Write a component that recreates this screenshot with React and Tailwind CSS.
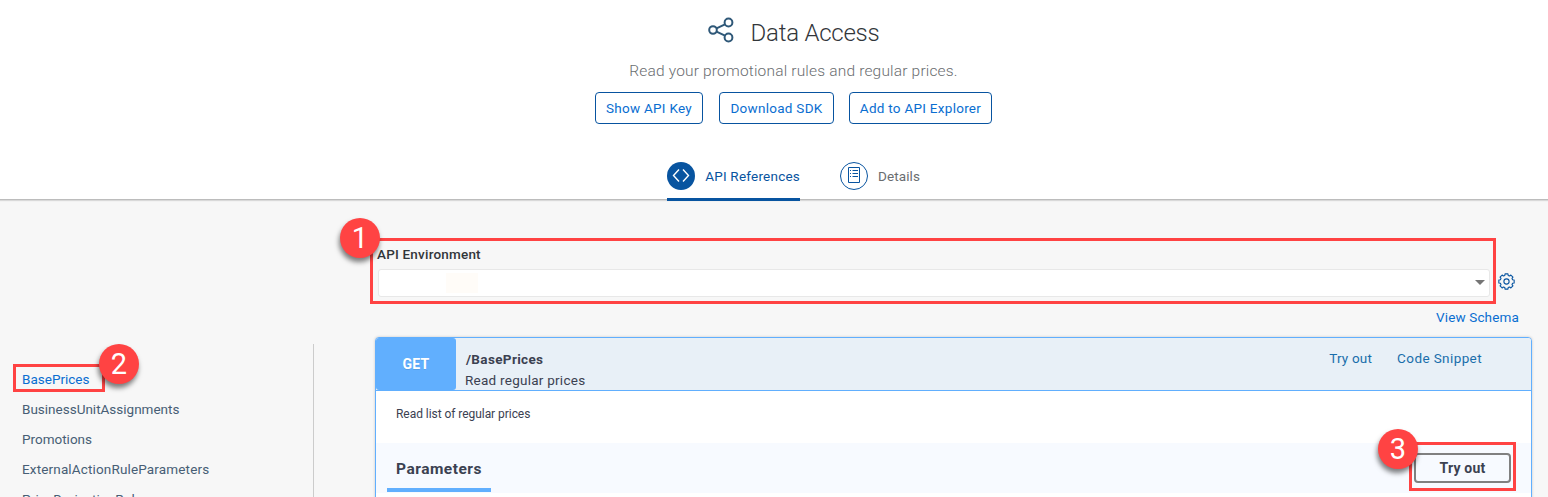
const Share = () => (
  <svg className="h-[27px] w-[27px]" viewBox="0 0 27 27" fill="none" stroke="#2f5878" strokeWidth="2">
    <circle cx="5" cy="13" r="3.8" />
    <circle cx="20.5" cy="5.5" r="3.9" />
    <circle cx="20.5" cy="20.5" r="3.9" />
    <path d="M8.5 11.4 17 7.3M8.5 14.6 17 18.7" />
  </svg>
);

const Gear = () => {
  const points = [];
  for (let i = 0; i < 8; i++) {
    [[-0.27, 6.3], [-0.19, 7.8], [0.19, 7.8], [0.27, 6.3]].forEach(([d, r]) => {
      const a = (i * Math.PI) / 4 + d;
      points.push(`${(8.5 + r * Math.cos(a)).toFixed(2)},${(8.5 + r * Math.sin(a)).toFixed(2)}`);
    });
  }
  return (
    <svg className="h-[17px] w-[17px]" viewBox="0 0 17 17" fill="none" stroke="#0854a0" strokeWidth="1.1" strokeLinejoin="round">
      <polygon points={points.join(' ')} />
      <circle cx="8.5" cy="8.5" r="2.6" />
    </svg>
  );
};

const Callout = ({ n, className }) => (
  <div className={`absolute z-20 flex h-10 w-10 items-center justify-center rounded-full bg-[#ff4343] pt-px text-[29px] leading-none font-normal text-white shadow-[-1px_4px_5px_rgba(0,0,0,0.5)] ${className}`}>
    {n}
  </div>
);

const Button = ({ children, className }) => (
  <button className={`h-8 rounded-[4px] border border-[#0854a0] text-[13.5px] tracking-[0.27px] whitespace-nowrap text-[#0a6ed1] ${className}`}>{children}</button>
);

const Header = () => (
  <header className="h-[200px] border-b border-[#bcbcbc] bg-white pl-[39px] shadow-[0_1px_1px_rgba(0,0,0,0.12)]">
    <div className="flex h-full flex-col items-center">
      <div className="mt-[17px] flex h-8 items-center gap-4">
        <div className="pb-[5px]"><Share /></div>
        <h1 className="text-[24px] leading-8 font-light tracking-[-0.25px] whitespace-nowrap text-[#32363a]">Data Access</h1>
      </div>
      <p className="mt-[11px] h-[22px] text-[15.5px] leading-[22px] font-light tracking-[0.18px] whitespace-nowrap text-[#6a6d70]">Read your promotional rules and regular prices.</p>
      <div className="mt-[10px] flex">
        <Button className="mr-4 w-[108px]">Show API Key</Button>
        <Button className="mr-[15px] w-[115px]">Download SDK</Button>
        <Button className="w-[143px]">Add to API Explorer</Button>
      </div>
      <nav className="mt-[34px] flex h-[43px] gap-10">
        <div className="relative z-10 flex h-[43px] w-[133px] justify-between border-b-[3px] border-[#0854a0] pt-1">
          <span className="flex h-7 w-7 items-center justify-center rounded-full bg-[#0854a0]">
            <svg className="h-[14px] w-[18px]" viewBox="0 0 18 14" fill="none" stroke="#fff" strokeWidth="1.4">
              <path d="M7 .5 1.500 6.500l5.500 6M11 .5l5.500 6-5.500 6" />
            </svg>
          </span>
          <span className="text-[13.5px] leading-7 tracking-[0.22px] whitespace-nowrap text-[#0854a0]">API References</span>
        </div>
        <div className="flex w-20 justify-between pt-1">
          <span className="flex h-7 w-7 items-center justify-center rounded-full border border-[#0854a0] pb-px">
            <svg className="h-[17px] w-[12px]" viewBox="0 0 12 17" fill="none" stroke="#0854a0">
              <path d="M.5.5h11v15H.5zM2 3.500h1M4.500 3.500H10M2 6.500h1M4.500 6.500H10M2 9.500h1M4.500 9.500H10" />
            </svg>
          </span>
          <span className="text-[13.5px] leading-7 tracking-[0.1px] whitespace-nowrap text-[#6a6d70]">Details</span>
        </div>
      </nav>
    </div>
  </header>
);

const Sidebar = () => (
  <aside className="mt-[144px] h-[153px] w-[314px] shrink-0 border-r border-[#ccc] pt-5 text-[13.5px] leading-[30px] whitespace-nowrap text-[#475e75]">
    <div className="relative ml-[13px] h-[28px] w-[92px] border-3 border-[#ff4343] pl-[6px] leading-[24px] text-[#0a6ed1]">
      BasePrices
      <Callout n="2" className="-top-[23px] left-[83px]" />
    </div>
    <div className="mt-[2px] ml-[22px]">
      <div>BusinessUnitAssignments</div>
      <div>Promotions</div>
      <div className="tracking-[0.15px]">ExternalActionRuleParameters</div>
      <div className="tracking-[0.15px]">PriceDerivationRules</div>
    </div>
  </aside>
);

const Environment = () => (
  <div className="flex items-start">
    <div className="relative -ml-[5px] h-[66px] w-[1126px] border-3 border-[#ff4343] pr-[3px] pl-[5px]">
      <Callout n="1" className="-top-[23px] -left-[33px]" />
      <div className="-ml-px h-7 text-[13.5px] leading-[26px] font-medium tracking-[0.2px] text-[#32363a]">API Environment</div>
      <div className="flex h-[28px] items-center justify-end rounded-[3px] border border-[#e8e8e8] bg-white pr-1">
        <span className="mr-auto ml-[67px] h-5 w-8 bg-[#fffcf8]" />
        <span className="mb-px h-0 w-0 border-x-[5px] border-t-[5px] border-x-transparent border-t-[#757575]" />
      </div>
    </div>
    <div className="mt-[35px] ml-[2px]"><Gear /></div>
  </div>
);

const Endpoint = () => (
  <section className="h-[200px] w-[1157px] rounded-[4px] border border-[#61affe] bg-white text-[#3b4151] shadow-[0_0_3px_rgba(0,0,0,0.19)]">
    <div className="flex h-[53px] rounded-t-[3px] border-b border-[#61affe] bg-[#e8f0f7]">
      <div className="h-[52px] w-20 rounded-[3px] bg-[#61affe] text-center text-[14px] leading-[53px] font-bold tracking-[0.3px] text-white [text-shadow:0_1px_0_rgba(0,0,0,0.1)]">GET</div>
      <div className="ml-[9px] pt-[11px] text-[13.5px] leading-[21px] whitespace-nowrap">
        <div className="pl-px font-bold tracking-[0.35px]">/BasePrices</div>
        <div className="tracking-[0.25px]">Read regular prices</div>
      </div>
      <div className="mr-[49px] ml-auto flex gap-[25px] text-[13.5px] leading-[41px] whitespace-nowrap text-[#196eab]">
        <span className="tracking-[0.2px]">Try out</span>
        <span className="tracking-[0.4px]">Code Snippet</span>
      </div>
    </div>
    <div className="h-[52px] pl-5 text-[12px] leading-[46px] tracking-[-0.05px]">Read list of regular prices</div>
    <div className="flex h-[50px] justify-between bg-[#f7faff]">
      <div className="ml-[11px] h-[49px] w-[104px] border-b-4 border-[#61affe] pl-[9px] text-[15.5px] leading-[53px] font-bold tracking-[0.5px]">Parameters</div>
      <div className="relative -mt-px mr-[15px] h-[49px] w-[107px] border-3 border-[#ff4343] px-[2px] pt-2">
        <button className="h-[30px] w-[97px] rounded-[4px] border-2 border-[#808080] text-[14px] leading-[26px] font-bold tracking-[0.2px]">Try out</button>
        <Callout n="3" className="-top-[16px] -left-[34px]" />
      </div>
    </div>
  </section>
);

export default function App() {
  return (
    <div className="h-[497px] w-[1548px] overflow-hidden bg-[#f7f7f7] font-['Roboto','Liberation_Sans',sans-serif]">
      <Header />
      <div className="flex h-[297px]">
        <Sidebar />
        <main className="ml-[61px] pt-[38px]">
          <Environment />
          <div className="h-[33px] w-[1144px] text-right text-[13.5px] leading-[27px] tracking-[0.15px] text-[#0a6ed1]">View Schema</div>
          <Endpoint />
        </main>
      </div>
    </div>
  );
}
